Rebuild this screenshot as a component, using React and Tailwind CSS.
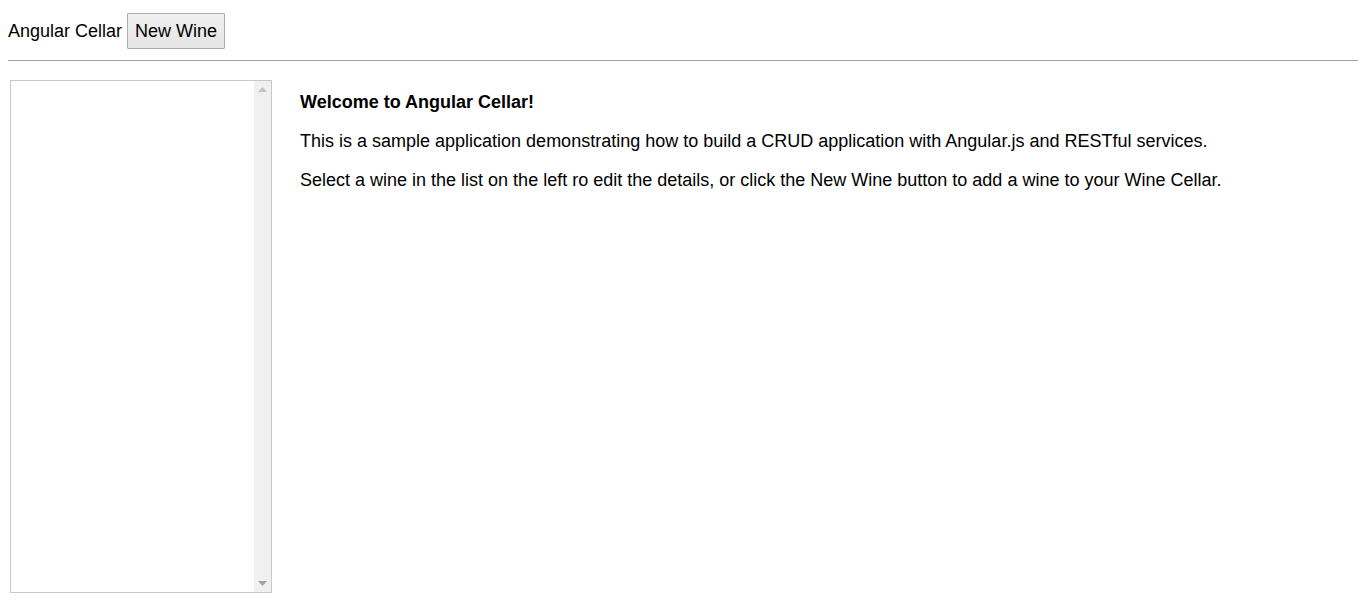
export default function App() {
  return (
    <div className="p-2 text-black bg-white min-h-[613px]" style={{ fontFamily: '"Liberation Sans", Arial, sans-serif' }}>
      <div className="flex items-center h-[36px] mt-[5px]">
        <span className="text-[18px] leading-none">Angular Cellar</span>
        <button className="ml-[5px] h-[36px] px-[7px] text-[18px] leading-none border border-[#adadad] bg-gradient-to-b from-[#f0f0f0] to-[#e5e5e5] rounded-[1px]">
          New Wine
        </button>
      </div>
      <div className="mt-[11px] h-px bg-[#a0a0a0] w-[1350px]" />
      <div className="flex mt-[19px] ml-[2px]">
        <div className="w-[262px] h-[513px] border border-[#c8c8c8] flex justify-end shrink-0">
          <div className="w-[17px] h-full bg-[#f0f0f0] flex flex-col items-center justify-between py-[6px]">
            <svg width="9" height="5" viewBox="0 0 9 5"><path d="M0 5 L4.5 0 L9 5 Z" fill="#c2c2c2" /></svg>
            <svg width="9" height="5" viewBox="0 0 9 5"><path d="M0 0 L4.5 5 L9 0 Z" fill="#a3a3a3" /></svg>
          </div>
        </div>
        <div className="ml-[28px] pt-[12px] text-[18px]">
          <p className="font-bold leading-[20px]">Welcome to Angular Cellar!</p>
          <p className="mt-[19px] leading-[20px]">This is a sample application demonstrating how to build a CRUD application with Angular.js and RESTful services.</p>
          <p className="mt-[19px] leading-[20px]">Select a wine in the list on the left ro edit the details, or click the New Wine button to add a wine to your Wine Cellar.</p>
        </div>
      </div>
    </div>
  );
}
